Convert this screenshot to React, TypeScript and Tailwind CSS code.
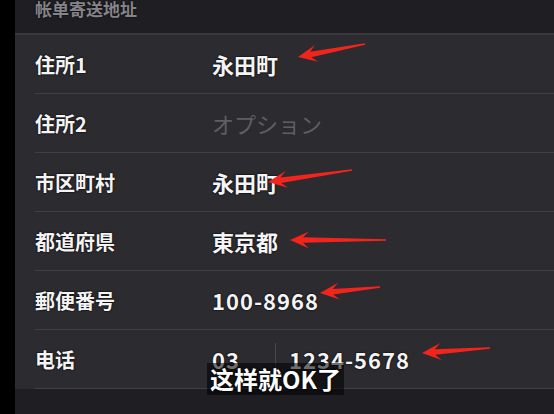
const rows: { label: string; value?: string; placeholder?: string; phone?: [string, string] }[] = [
  { label: "住所1", value: "永田町" },
  { label: "住所2", placeholder: "オプション" },
  { label: "市区町村", value: "永田町" },
  { label: "都道府県", value: "東京都" },
  { label: "郵便番号", value: "100-8968" },
  { label: "电话", phone: ["03", "1234-5678"] },
];

// red annotation arrows: tip -> tail
const arrows: [number, number, number, number][] = [
  [298, 57, 365, 44],
  [268, 182, 352, 170],
  [290, 240, 386, 240],
  [320, 293, 380, 287],
  [422, 353, 490, 348],
];

function arrowPoints(x1: number, y1: number, x2: number, y2: number) {
  const dx = x2 - x1;
  const dy = y2 - y1;
  const len = Math.hypot(dx, dy);
  const ux = dx / len;
  const uy = dy / len;
  const nx = -uy;
  const ny = ux;
  const L = 19;
  const W = 8.5;
  const neck = 13;
  const s = 2.8;
  const t = 0.8;
  const p = (a: number, b: number) => `${a.toFixed(1)},${b.toFixed(1)}`;
  return [
    p(x1, y1),
    p(x1 + ux * L + nx * W, y1 + uy * L + ny * W),
    p(x1 + ux * neck + nx * s, y1 + uy * neck + ny * s),
    p(x2 + nx * t, y2 + ny * t),
    p(x2 - nx * t, y2 - ny * t),
    p(x1 + ux * neck - nx * s, y1 + uy * neck - ny * s),
    p(x1 + ux * L - nx * W, y1 + uy * L - ny * W),
  ].join(" ");
}

export default function App() {
  return (
    <div className="relative w-[554px] h-[414px] overflow-hidden bg-black flex font-['Noto_Sans_CJK_JP',sans-serif]">
      <div className="w-[15px] shrink-0 bg-black" />

      <div className="flex-1 flex flex-col bg-[#1f1e23]">
        {/* Section header */}
        <div className="h-[35px] shrink-0 pl-[20px] border-b-2 border-[#3a393e]">
          <p className="-mt-[1px] text-[17px] leading-[20px] font-semibold text-[#85848a] [text-shadow:0_0_2px_#000]">
            帐单寄送地址
          </p>
        </div>

        {/* Rows */}
        <div className="bg-[#2c2b30] pl-[20px]">
          {rows.map((row) => (
            <div
              key={row.label}
              className="h-[59px] flex items-center border-b border-[#403f44] text-[#f4f4f4] font-semibold [text-shadow:0_0_2px_#000,0_0_1px_#000]"
            >
              <span className="w-[177px] shrink-0 text-[20px] mt-[2px]">{row.label}</span>
              {row.value && (
                <span className={/\d/.test(row.value) ? "text-[22px] tracking-[1px]" : "text-[22px]"}>
                  {row.value}
                </span>
              )}
              {row.placeholder && (
                <span className="text-[22px] font-normal text-[#5f5e64] [text-shadow:none]">{row.placeholder}</span>
              )}
              {row.phone && (
                <div className="flex items-center h-full text-[22px] tracking-[1px]">
                  <span className="w-[63px]">{row.phone[0]}</span>
                  <div className="w-px h-[34px] self-start mt-[13px] bg-[#48474c]" />
                  <span className="pl-[13px]">{row.phone[1]}</span>
                </div>
              )}
            </div>
          ))}
        </div>

        <div className="flex-1 bg-[#1f1e23]" />
      </div>

      {/* Annotation arrows */}
      <svg className="absolute inset-0 pointer-events-none" width="554" height="414" viewBox="0 0 554 414">
        {arrows.map(([a, b, c, d], i) => (
          <polygon key={i} points={arrowPoints(a, b, c, d)} fill="#f3241c" />
        ))}
      </svg>

      {/* Video subtitle */}
      <div className="absolute left-[207px] top-[363px] h-[32px] px-[3px] flex items-center bg-black/55">
        <span className="font-['Noto_Sans_CJK_SC',sans-serif] text-[24px] leading-none font-bold text-white [text-shadow:0_0_2px_#000,0_0_2px_#000]">
          这样就OK了
        </span>
      </div>
    </div>
  );
}
